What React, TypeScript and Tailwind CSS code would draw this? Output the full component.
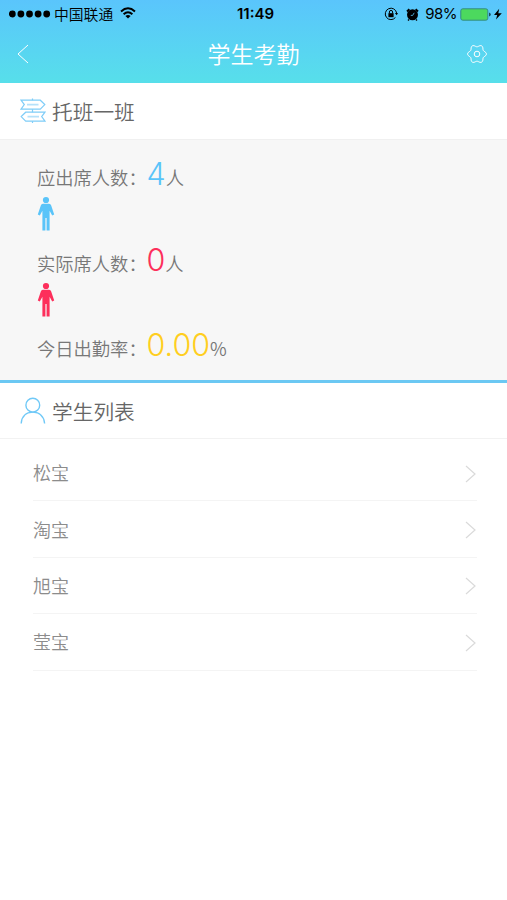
import React from "react";

const students = ["松宝", "淘宝", "旭宝", "莹宝"];

// Outline of a soft six-lobed gear centred in a 20×20 box.
const gearPoints = Array.from({ length: 72 }, (_, i) => {
  const angle = (i * Math.PI) / 36;
  const radius = 8.3 + 1.1 * Math.cos(6 * angle);
  return `${(10 + radius * Math.cos(angle)).toFixed(2)},${(10 + radius * Math.sin(angle)).toFixed(2)}`;
}).join(" ");

function StatusBar() {
  return (
    <div className="flex h-7 items-center text-black">
      <div className="flex flex-1 items-center pl-[9px]">
        <svg width="42" height="8" viewBox="0 0 42 8" fill="currentColor">
          {[3.3, 11.9, 20.5, 29.1, 37.7].map((x) => (
            <circle key={x} cx={x} cy="4" r="3.4" />
          ))}
        </svg>
        <span className="-mt-px ml-[3px] text-[14.8px] leading-7">中国联通</span>
        <svg className="ml-[7px] mt-[-3px]" width="16" height="12" viewBox="0 0 16 12" fill="none" stroke="currentColor" strokeWidth="2">
          <path d="M1 4.4Q8-1.8 15 4.4" />
          <path d="M3.6 7.2Q8 3.4 12.4 7.2" />
          <path d="M8 11.5 5.4 9Q8 6.9 10.6 9Z" fill="currentColor" stroke="none" />
        </svg>
      </div>
      <span className="font-[Inter] text-[15px] font-semibold leading-7">11:49</span>
      <div className="flex flex-1 items-center justify-end pr-[5px]">
        <svg width="14" height="14" viewBox="0 0 14 14" fill="none" stroke="currentColor" strokeWidth="1">
          <path d="M11.4 10.5A5.7 5.7 0 1 1 12.6 6" />
          <path d="m10.9 6 1.8 2.2L14 6Z" fill="currentColor" stroke="none" />
          <rect x="4.4" y="6.2" width="5.2" height="4" fill="currentColor" stroke="none" />
          <path d="M5.4 6.5V5a1.6 1.6 0 0 1 3.2 0v1.5" />
        </svg>
        <svg className="ml-2" width="13" height="13" viewBox="0 0 13 13">
          <circle cx="6.5" cy="6.8" r="5.5" fill="currentColor" />
          <path d="M1 3.4 3.4 1.2M12 3.4 9.6 1.2" stroke="currentColor" strokeWidth="2" />
          <path d="M3 11.4 2 12.4M10 11.4l1 1" stroke="currentColor" strokeWidth="1.4" />
          <path d="M4.8 7.4h1.9l1.5-2.6" fill="none" stroke="#5ac7f8" strokeWidth=".8" />
        </svg>
        <span className="ml-[6px] font-[Inter] text-[15px] font-normal leading-7 tracking-[-0.5px]">98%</span>
        <svg className="ml-[3px]" width="31" height="13" viewBox="0 0 31 13">
          <rect x=".8" y=".8" width="27" height="11.4" rx="2" fill="#4cd95e" stroke="#348b83" strokeWidth="1" />
          <path d="M29 4.4q1.8.4 1.8 2.1T29 8.6Z" fill="#17505f" />
        </svg>
        <svg className="ml-[3px]" width="8" height="12" viewBox="0 0 8 12" fill="currentColor">
          <path d="M5.2.8 0 7h3.2L2 11.6 7.8 5.2H4.3Z" />
        </svg>
      </div>
    </div>
  );
}

function Person({ className }: { className: string }) {
  return (
    <svg className={className} width="18" height="36" viewBox="0 0 18 36" fill="currentColor">
      <circle cx="9" cy="4" r="3.1" />
      <path d="M5.8 7.7h6.4q1.4 0 1.9 1.5l3.1 9.3-2 .9-2.6-4.6v19.6H9.6V22H8.4v12.4h-3V14.8l-2.6 4.6-2-.9 3.1-9.3q.5-1.5 1.9-1.5Z" />
    </svg>
  );
}

function SignIcon() {
  return (
    <svg width="26" height="26" viewBox="0 0 26 26" fill="none" stroke="#7fcdf8" strokeWidth="1.2">
      <path d="M1 2.2h19.3l4.5 4.4-4.5 4.6H1l3.3-4.6Z" />
      <path d="M25 14.2H5.7L1.2 18.6l4.5 4.6H25l-3.3-4.6Z" />
      <path d="M12.5.6v1.6M12.5 11.2v3M12.5 23.2V25" />
      <path d="M7 6.6h11.5M7.5 18.6H19" stroke="#b5e1fa" strokeWidth="1.8" />
    </svg>
  );
}

function UserIcon() {
  return (
    <svg width="26" height="28" viewBox="0 0 26 28" fill="none" stroke="#70c9f7" strokeWidth="1.4">
      <circle cx="12.8" cy="8.2" r="6.9" />
      <path d="M1.2 26.5C1.6 19.5 6 15.1 12.8 15.1S24 19.5 24.6 26.5" />
    </svg>
  );
}

function Stat({ label, value, unit, color }: { label: string; value: string; unit: string; color: string }) {
  return (
    <div className="flex h-10 items-baseline text-[18.3px] leading-10 text-[#777]">
      <span className="w-[109.5px] whitespace-nowrap">{label}</span>
      <span className={`font-[Inter] text-[30.5px] font-light ${color}`}>{value}</span>
      <span>{unit}</span>
    </div>
  );
}

export default function App() {
  return (
    <main className="min-h-[900px] w-full bg-white font-['Noto_Sans_CJK_SC',sans-serif] font-[350]">
      <header className="h-[83px] bg-gradient-to-b from-[#5ac5fc] to-[#57dfea]">
        <StatusBar />
        <div className="flex h-[52px] items-center justify-between pl-4 pr-5 text-white">
          <svg width="14" height="20" viewBox="0 0 14 20" fill="none" stroke="currentColor" strokeWidth="1">
            <path d="M12 1 2 10l10 9" />
          </svg>
          <h1 className="-mt-0.5 pl-[10px] text-[23px] font-[350] leading-[50px]">学生考勤</h1>
          <svg width="20" height="20" viewBox="0 0 20 20" fill="none" stroke="currentColor" strokeWidth="1" strokeLinejoin="round">
            <polygon points={gearPoints} />
            <circle cx="10" cy="10" r="2.8" />
          </svg>
        </div>
      </header>

      <section className="flex h-14 items-center gap-[6px] pl-5">
        <SignIcon />
        <h2 className="text-[20.7px] font-[350] leading-none text-[#666]">托班一班</h2>
      </section>

      <section className="h-[244px] border-b-[3px] border-t border-b-[#6bc8f3] border-t-[#f0f0f0] bg-[#f7f7f7] pl-[37px] pt-[14px]">
        <Stat label="应出席人数：" value="4" unit="人" color="text-[#5ac4f9]" />
        <Person className="mb-2 mt-0.5 text-[#5ac4f9]" />
        <Stat label="实际席人数：" value="0" unit="人" color="text-[#fd2f5b]" />
        <Person className="mb-[7px] mt-0.5 text-[#fd2f5b]" />
        <Stat label="今日出勤率：" value="0.00" unit="%" color="text-[#ffce20]" />
      </section>

      <section>
        <div className="flex h-14 items-center gap-[6px] border-b border-[#f2f2f2] pl-5">
          <UserIcon />
          <h2 className="pt-px text-[20.7px] font-[350] leading-none text-[#666]">学生列表</h2>
        </div>
        <ul className="pl-[33px] pr-[30px] pt-[6px]">
          {students.map((name) => (
            <li key={name} className="flex h-[56.4px] items-center justify-between border-b border-[#f4f4f4] text-[18px] text-[#8c8c8c]">
              <span className="-mt-px leading-none">{name}</span>
              <svg className="mt-0.5" width="13" height="18" viewBox="0 0 13 18" fill="none" stroke="#dadada" strokeWidth="1.2">
                <path d="m2 1 9 8-9 8" />
              </svg>
            </li>
          ))}
        </ul>
      </section>
    </main>
  );
}
